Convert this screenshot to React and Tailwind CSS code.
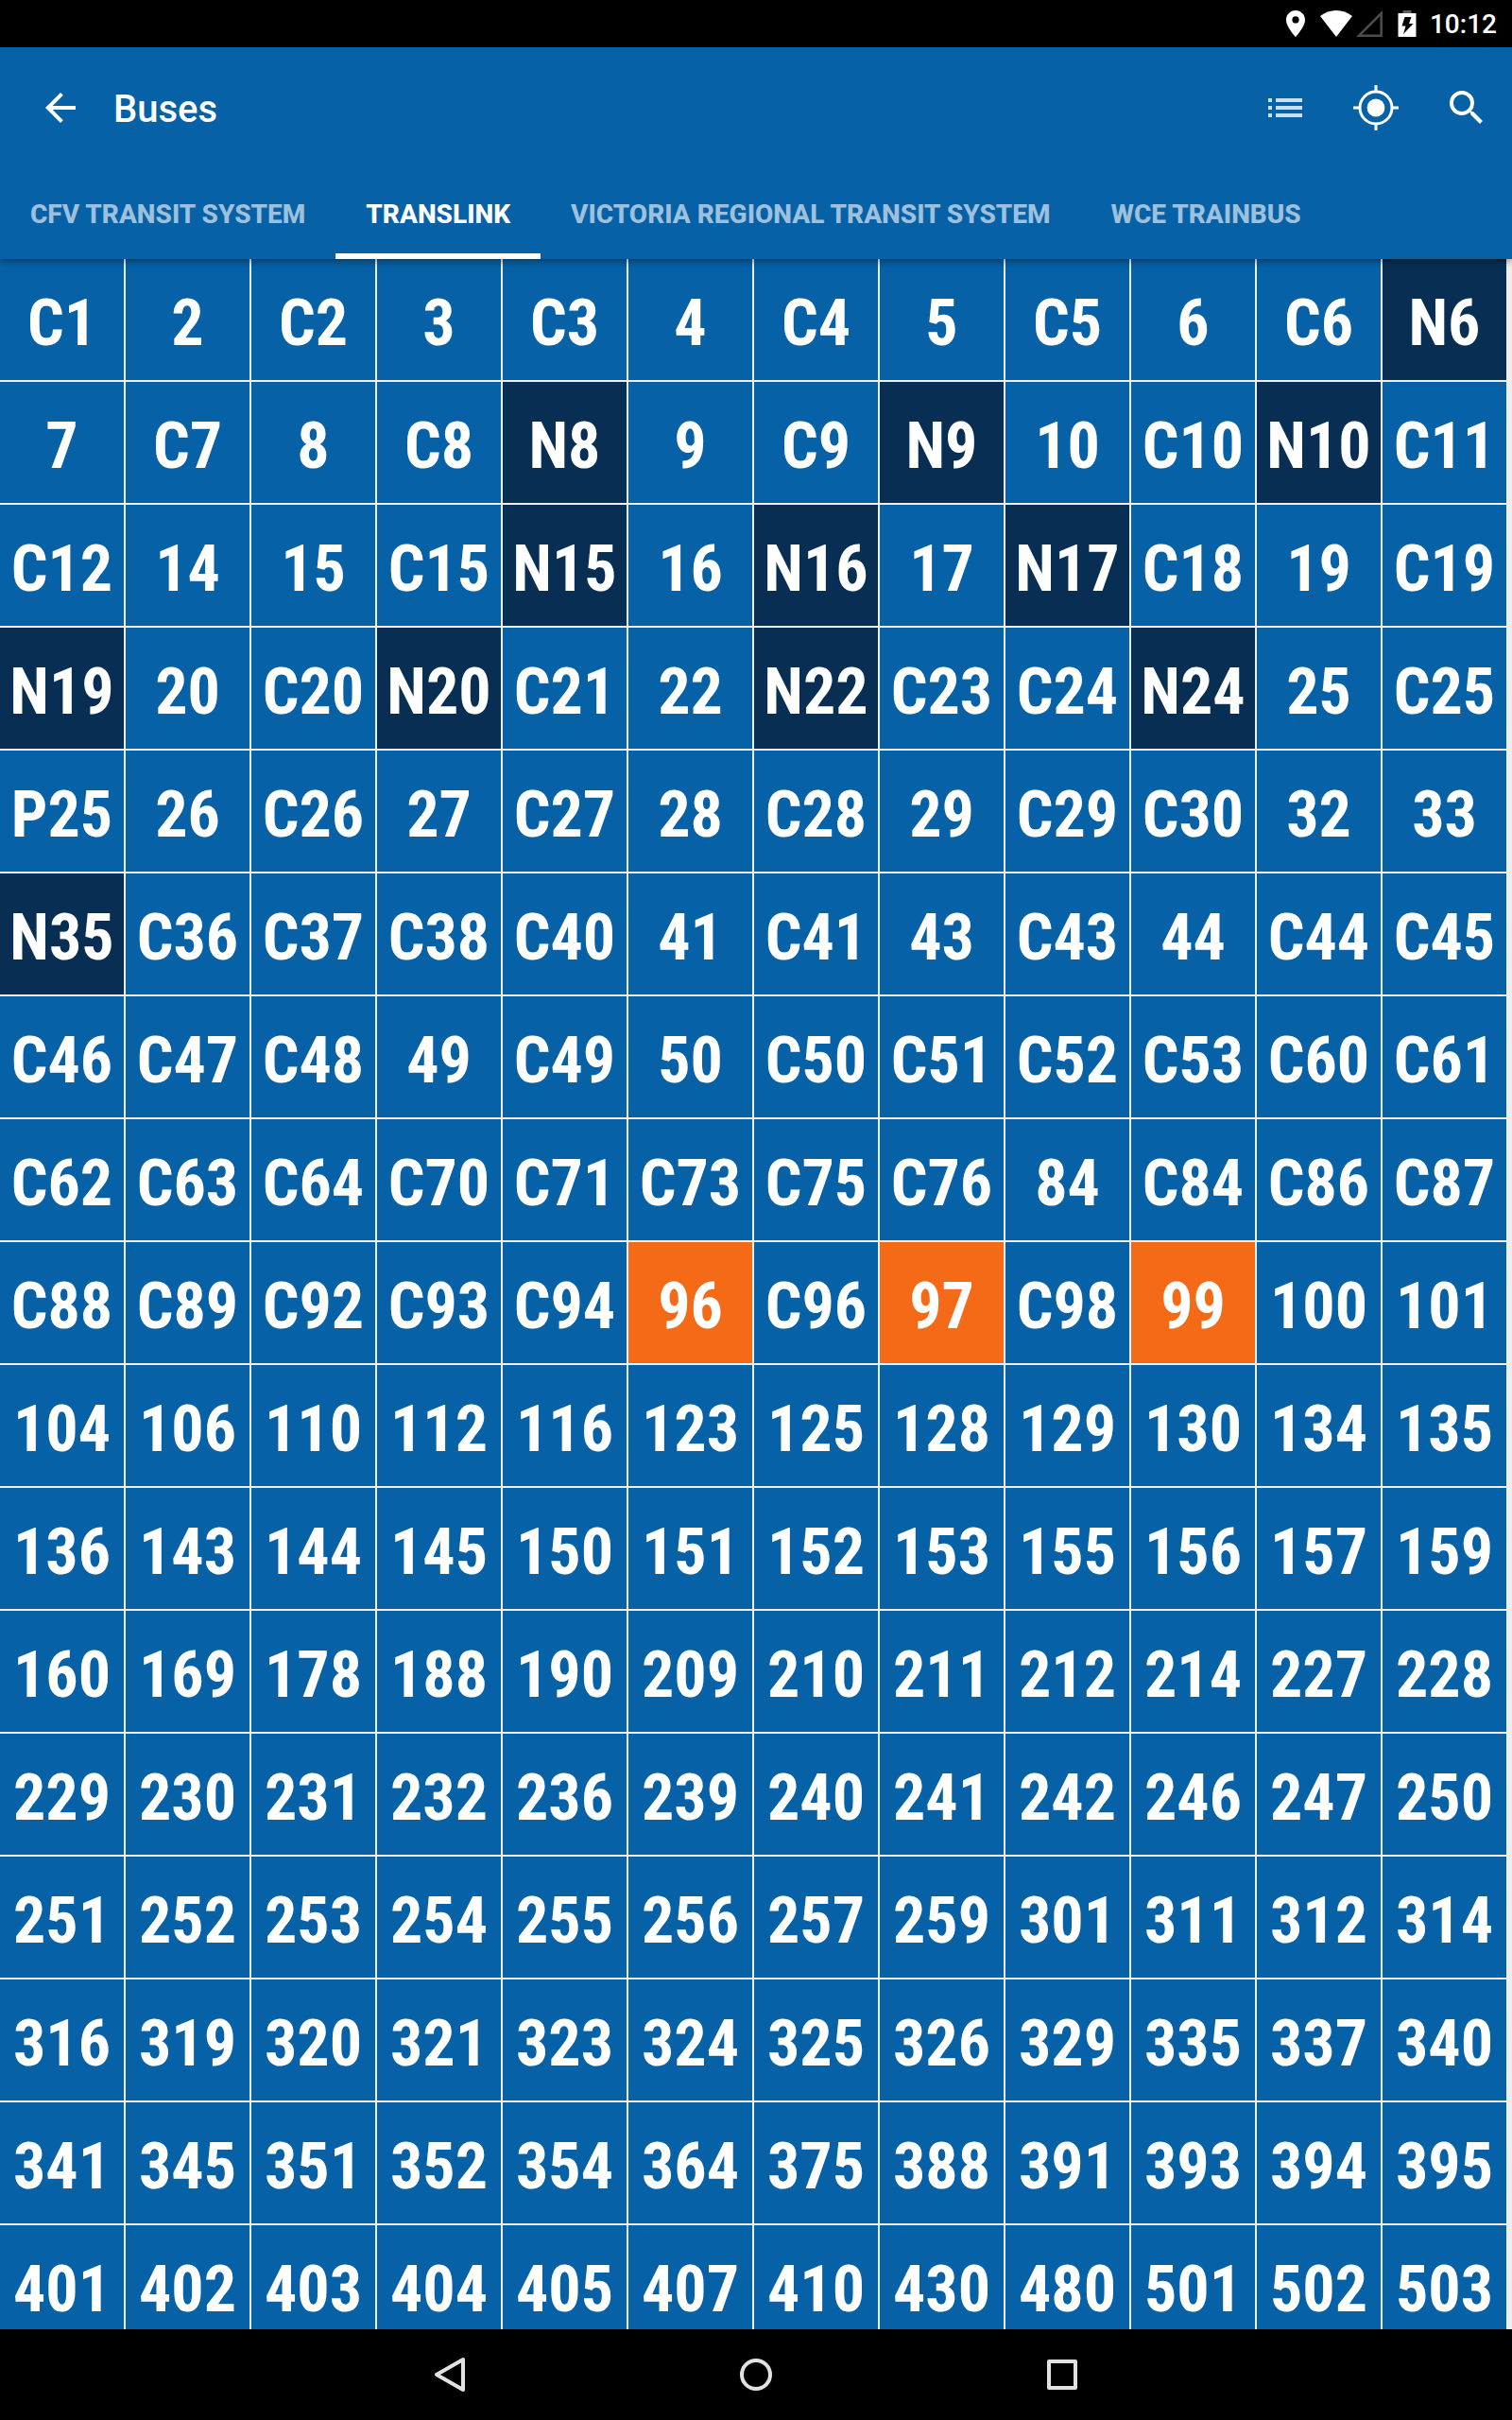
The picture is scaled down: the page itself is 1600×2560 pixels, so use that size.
import { MdArrowBack, MdList, MdSearch } from "react-icons/md";

const ROUTES = `C1 2 C2 3 C3 4 C4 5 C5 6 C6 N6
7 C7 8 C8 N8 9 C9 N9 10 C10 N10 C11
C12 14 15 C15 N15 16 N16 17 N17 C18 19 C19
N19 20 C20 N20 C21 22 N22 C23 C24 N24 25 C25
P25 26 C26 27 C27 28 C28 29 C29 C30 32 33
N35 C36 C37 C38 C40 41 C41 43 C43 44 C44 C45
C46 C47 C48 49 C49 50 C50 C51 C52 C53 C60 C61
C62 C63 C64 C70 C71 C73 C75 C76 84 C84 C86 C87
C88 C89 C92 C93 C94 96 C96 97 C98 99 100 101
104 106 110 112 116 123 125 128 129 130 134 135
136 143 144 145 150 151 152 153 155 156 157 159
160 169 178 188 190 209 210 211 212 214 227 228
229 230 231 232 236 239 240 241 242 246 247 250
251 252 253 254 255 256 257 259 301 311 312 314
316 319 320 321 323 324 325 326 329 335 337 340
341 345 351 352 354 364 375 388 391 393 394 395
401 402 403 404 405 407 410 430 480 501 502 503`.split(/\s+/);

const EXPRESS = ["96", "97", "99"];

const TABS = ["CFV TRANSIT SYSTEM", "TRANSLINK", "VICTORIA REGIONAL TRANSIT SYSTEM", "WCE TRAINBUS"];

function routeColor(route) {
  if (EXPRESS.includes(route)) return "bg-[#f56a17]";
  if (route.startsWith("N")) return "bg-[#082f53]";
  return "bg-[#0661a7]";
}

function StatusBar() {
  return (
    <div className="flex h-[50px] items-center justify-end bg-black pr-4 text-white">
      <svg className="mr-4 h-7 w-5" viewBox="0 0 20 28" fill="currentColor" aria-hidden="true">
        <path fillRule="evenodd" d="M10 0C4.500 0 0 4.400 0 9.900 0 17.300 10 28 10 28S20 17.300 20 9.900C20 4.400 15.500 0 10 0ZM10 13.500a3.600 3.600 0 1 1 0-7.200 3.600 3.600 0 0 1 0 7.200Z" />
      </svg>
      <svg className="mr-1 h-7 w-[34px]" viewBox="0 0 34 28" fill="currentColor" aria-hidden="true">
        <path d="M17 28 34 6C29 2 23 0 17 0S5 2 0 6Z" />
      </svg>
      <svg className="mr-4 h-7 w-7" viewBox="0 0 28 28" fill="none" stroke="#4d4d4d" strokeWidth="2.500" aria-hidden="true">
        <path d="M26.700 3V26.700H3Z" />
      </svg>
      <svg className="mr-3.5 h-7 w-5" viewBox="0 0 20 28" aria-hidden="true">
        <path d="M5.500 0h9v4h-9z" fill="#5c5c5c" />
        <path d="M.5 3h19v25H.5z" fill="currentColor" />
        <path d="M7.500 7h7l-2.500 7h4.500L6 25l2.500-8.500H4.500Z" fill="#000" />
      </svg>
      <span className="pt-[2px] text-[28px] leading-8 font-medium">10:12</span>
    </div>
  );
}

function ActionButton({ label, children }) {
  return (
    <button type="button" aria-label={label} className="flex h-24 w-24 items-center justify-center">
      {children}
    </button>
  );
}

function Toolbar() {
  return (
    <div className="flex h-32 items-center">
      <button type="button" aria-label="Back" className="flex h-24 w-[120px] items-center pl-10">
        <MdArrowBack size={48} />
      </button>
      <h1 className="flex-1 pt-1 text-[40px] leading-[48px] font-medium">Buses</h1>
      <ActionButton label="List view">
        <MdList size={48} className="opacity-80" />
      </ActionButton>
      <ActionButton label="My location">
        <svg width="48" height="48" viewBox="0 0 48 48" fill="none" stroke="currentColor" strokeWidth="3" aria-hidden="true">
          <circle cx="24" cy="24" r="17" />
          <circle cx="24" cy="24" r="9.400" fill="currentColor" stroke="none" />
          <path d="M24 0v7M24 41v7M0 24h7M41 24h7" />
        </svg>
      </ActionButton>
      <ActionButton label="Search">
        <MdSearch size={48} />
      </ActionButton>
    </div>
  );
}

function Tabs() {
  return (
    <div role="tablist" className="flex h-24">
      {TABS.map((tab) => {
        const selected = tab === "TRANSLINK";
        return (
          <button
            key={tab}
            type="button"
            role="tab"
            aria-selected={selected}
            className={`border-b-[6px] px-8 pt-2 text-[28px] leading-8 font-extrabold whitespace-nowrap ${
              selected ? "border-white text-white" : "border-transparent text-[#9dc0dd]"
            }`}
          >
            {tab}
          </button>
        );
      })}
    </div>
  );
}

function NavBar() {
  return (
    <nav className="flex h-24 shrink-0 items-center justify-center bg-black text-[#e2e2e2]">
      <button type="button" aria-label="Back" className="flex h-24 w-[324px] items-center justify-center">
        <svg width="40" height="40" viewBox="0 0 40 40" fill="none" stroke="currentColor" strokeWidth="4" strokeLinejoin="round" aria-hidden="true">
          <path d="M34 4V36L6 20Z" />
        </svg>
      </button>
      <button type="button" aria-label="Home" className="flex h-24 w-[324px] items-center justify-center">
        <svg width="40" height="40" viewBox="0 0 40 40" fill="none" stroke="currentColor" strokeWidth="4" aria-hidden="true">
          <circle cx="20" cy="20" r="15" />
        </svg>
      </button>
      <button type="button" aria-label="Recent apps" className="flex h-24 w-[324px] items-center justify-center">
        <svg width="40" height="40" viewBox="0 0 40 40" fill="none" stroke="currentColor" strokeWidth="4" strokeLinejoin="round" aria-hidden="true">
          <rect x="6" y="6" width="28" height="28" />
        </svg>
      </button>
    </nav>
  );
}

export default function App() {
  return (
    <div className="flex h-screen flex-col bg-[#eeeeee] font-[Roboto,sans-serif] text-white">
      <StatusBar />
      <header className="relative z-10 bg-[#0661a7] shadow-[0_2px_8px_rgba(0,0,0,0.45)]">
        <Toolbar />
        <Tabs />
      </header>
      <main className="min-h-0 flex-1 overflow-hidden pr-[6px]">
        <div className="grid grid-cols-12 gap-[2px]">
          {ROUTES.map((route) => (
            <button
              key={route}
              type="button"
              className={`flex h-32 min-w-0 items-center justify-center pt-2 font-['Roboto_Condensed','Liberation_Sans_Narrow',Roboto,sans-serif] text-[68px] leading-[80px] font-bold ${routeColor(route)}`}
            >
              {route}
            </button>
          ))}
        </div>
      </main>
      <NavBar />
    </div>
  );
}
